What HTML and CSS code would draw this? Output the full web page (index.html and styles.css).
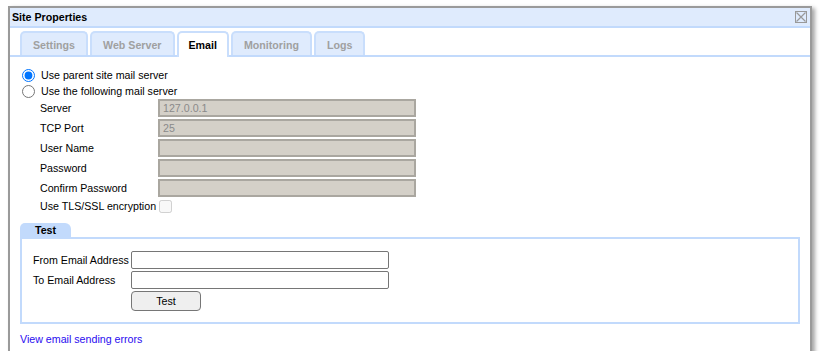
FILE: index.html
```html
<!DOCTYPE html>
<html>
<head>
<meta charset="utf-8">
<link rel="stylesheet" href="styles.css">
</head>
<body>
<div class="dialog">
  <div class="titlebar">
    <span class="title">Site Properties</span>
    <svg class="close" width="12" height="12" viewBox="0 0 12 12">
      <rect x="0.5" y="0.5" width="11" height="11" fill="none" stroke="#999" stroke-width="1"/>
      <path d="M1.5 1.5 L10.5 10.5 M10.5 1.5 L1.5 10.5" stroke="#999" stroke-width="1.2"/>
    </svg>
  </div>
  <div class="tabs">
    <div class="tab">Settings</div>
    <div class="tab">Web Server</div>
    <div class="tab active">Email</div>
    <div class="tab">Monitoring</div>
    <div class="tab">Logs</div>
  </div>
  <div class="content">
    <label class="radio-row"><input type="radio" name="srv" checked><span>Use parent site mail server</span></label>
    <label class="radio-row"><input type="radio" name="srv"><span>Use the following mail server</span></label>
    <div class="fields">
      <span class="lbl">Server</span><input class="dis" type="text" value="127.0.0.1" disabled>
      <span class="lbl">TCP Port</span><input class="dis" type="text" value="25" disabled>
      <span class="lbl">User Name</span><input class="dis" type="text" disabled>
      <span class="lbl">Password</span><input class="dis" type="text" disabled>
      <span class="lbl">Confirm Password</span><input class="dis" type="text" disabled>
    </div>
    <div class="tls"><span>Use TLS/SSL encryption</span><input type="checkbox" disabled></div>
    <div class="group">
      <div class="legend">Test</div>
      <div class="box">
        <div class="test-grid">
          <span class="lbl">From Email Address</span><input class="txt" type="text">
          <span class="lbl">To Email Address</span><input class="txt" type="text">
          <span></span><button class="btn">Test</button>
        </div>
      </div>
    </div>
    <a class="link" href="#">View email sending errors</a>
  </div>
</div>
</body>
</html>
```

FILE: styles.css
```css
html, body {
  margin: 0;
  padding: 0;
  background: #fff;
  overflow: hidden;
}
body {
  font-family: "Liberation Sans", Arial, sans-serif;
  font-size: 10.667px;
  color: #000;
}
.dialog {
  margin: 6px 0 0 8px;
  width: 800px;
  height: 380px;
  border: 2px solid #9a9a9a;
  box-shadow: 3px 2px 4px rgba(0,0,0,0.35);
  background: #fff;
  display: flex;
  flex-direction: column;
}
.titlebar {
  height: 18px;
  background: #dfebfd;
  border-bottom: 2px solid #c2dafc;
  display: flex;
  align-items: center;
  justify-content: space-between;
  padding: 0 3px 0 2px;
}
.title {
  font-weight: bold;
}
.close {
  display: block;
}
.tabs {
  display: flex;
  gap: 2px;
  padding: 3px 10px 0 10px;
  border-bottom: 2px solid #c2dafc;
  height: 24px;
  align-items: flex-end;
}
.tab {
  height: 22px;
  line-height: 24px;
  padding: 0 11px;
  background: #dfebfd;
  border: 2px solid #c9defc;
  border-bottom: none;
  border-radius: 5px 5px 0 0;
  font-weight: bold;
  color: #a0a0a0;
}
.tab.active {
  background: #fff;
  color: #000;
  height: 24px;
  margin-bottom: -2px;
  padding: 0 10px;
}
.content {
  padding: 10px 10px 0 10px;
  display: flex;
  flex-direction: column;
}
.radio-row {
  display: flex;
  align-items: center;
  height: 16px;
}
.radio-row input {
  margin: 0 6px 0 2px;
  width: 13px;
  height: 13px;
}
.fields {
  display: grid;
  grid-template-columns: 118px 258px;
  grid-auto-rows: 18px;
  row-gap: 2px;
  padding-left: 20px;
}
.lbl {
  display: flex;
  align-items: center;
}
.dis {
  box-sizing: border-box;
  height: 18px;
  width: 258px;
  margin: 0;
  border: 2px solid #aaa7a0;
  background: #d4d0c8;
  color: #8a8a8a;
  font-family: inherit;
  font-size: 10.667px;
  padding: 0 0 0 3px;
  border-radius: 0;
}
.tls {
  display: flex;
  align-items: center;
  height: 16px;
  margin-top: 1px;
  padding-left: 20px;
}
.tls input {
  margin: 0 0 0 3px;
  width: 13px;
  height: 13px;
}
.group {
  margin-top: 9px;
  display: flex;
  flex-direction: column;
}
.legend {
  width: 51px;
  height: 14px;
  line-height: 15px;
  background: #c2dafc;
  border-radius: 5px 6px 0 0;
  font-weight: bold;
  text-align: center;
}
.box {
  border: 2px solid #c2dafc;
  padding: 12px 11px 11px 11px;
}
.test-grid {
  display: grid;
  grid-template-columns: 98px 258px;
  grid-template-rows: 18px 18px 20px;
  row-gap: 2px;
}
.txt {
  box-sizing: border-box;
  height: 18px;
  width: 258px;
  margin: 0;
  border: 1px solid #767676;
  border-radius: 2px;
  background: #fff;
  padding: 0 2px;
  font-family: inherit;
  font-size: 10.667px;
}
.btn {
  box-sizing: border-box;
  width: 70px;
  height: 20px;
  margin: 0;
  border: 1px solid #767676;
  border-radius: 4px;
  background: #efefef;
  font-family: inherit;
  font-size: 10.667px;
  color: #000;
  padding: 0;
}
.link {
  margin-top: 9px;
  color: #2a0cf0;
  text-decoration: none;
  line-height: 12px;
  align-self: flex-start;
}
```
